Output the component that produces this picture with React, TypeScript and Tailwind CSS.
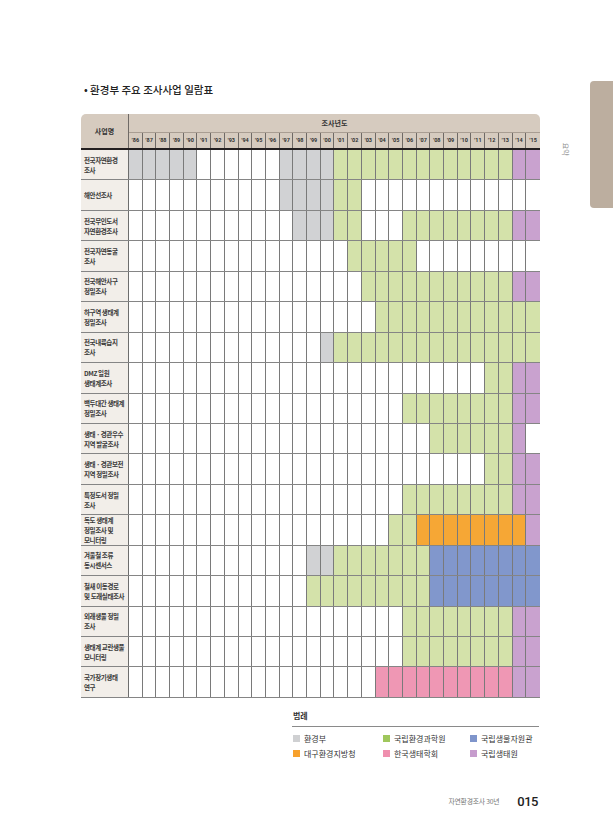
const YEARS = [
    "86", "87", "88", "89", "90", "91", "92", "93", "94", "95", "96", "97", "98", "99", "00",
    "01", "02", "03", "04", "05", "06", "07", "08", "09", "10", "11", "12", "13", "14", "15",
];

// one letter per year, '86 → '15
const ROWS: { label: string[]; cells: string }[] = [
    { label: ["전국자연환경", "조사"], cells: "ggggg......ggggnnnnnnnnnnnnnpp" },
    { label: ["해안선조사"], cells: "...........ggggnn............." },
    { label: ["전국무인도서", "자연환경조사"], cells: "............gggnn...nnnnnnnnpp" },
    { label: ["전국자연동굴", "조사"], cells: "................nnnnn........." },
    { label: ["전국해안사구", "정밀조사"], cells: ".................nnnnnnnnnnnpp" },
    { label: ["하구역 생태계", "정밀조사"], cells: "..................nnnnnnnnnnnn" },
    { label: ["전국내륙습지", "조사"], cells: "..............gnnnnnnnnnnnnnnn" },
    { label: ["DMZ 일원", "생태계조사"], cells: "..........................nnpp" },
    { label: ["백두대간 생태계", "정밀조사"], cells: "....................nnnnnnnnpp" },
    { label: ["생태 · 경관우수", "지역 발굴조사"], cells: "......................nnnnnnp." },
    { label: ["생태 · 경관보전", "지역 정밀조사"], cells: "..........................nnpp" },
    { label: ["특정도서 정밀", "조사"], cells: "....................nnnnnnnnpp" },
    { label: ["독도 생태계", "정밀조사 및", "모니터링"], cells: "...................nnoooooooop" },
    { label: ["겨울철 조류", "동시센서스"], cells: ".............ggnnnnnnnbbbbbbbb" },
    { label: ["철새 이동경로", "및 도래실태조사"], cells: ".............nnnnnnnnnbbbbbbbb" },
    { label: ["외래생물 정밀", "조사"], cells: "....................nnnnnnnnpp" },
    { label: ["생태계 교란생물", "모니터링"], cells: "....................nnnnnnnnpp" },
    { label: ["국가장기생태", "연구"], cells: "..................kkkkkkkkkkpp" },
];

const CELL: Record<string, string> = {
    ".": "bg-white",
    g: "bg-[#d1d2d4]",
    n: "bg-[#d4e2aa]",
    p: "bg-[#c9a2cf]",
    o: "bg-[#f6a735]",
    b: "bg-[#8197cc]",
    k: "bg-[#ef97b4]",
};

const LEGEND = [
    { name: "환경부", color: "bg-[#cfd0d2]" },
    { name: "국립환경과학원", color: "bg-[#9fc75c]" },
    { name: "국립생물자원관", color: "bg-[#7f95cb]" },
    { name: "대구환경지방청", color: "bg-[#f7a12d]" },
    { name: "한국생태학회", color: "bg-[#ef8fae]" },
    { name: "국립생태원", color: "bg-[#c69ccd]" },
];

function SurveyTable() {
    return (
        <div className="w-[459px]">
            <div className="flex h-[34px] rounded-t-[5px] bg-[#d6cbbf] overflow-hidden">
                <div className="w-[48px] flex items-center justify-center border-r border-[#6f6a66] text-[7px] font-bold text-[#333]">
                    사업명
                </div>
                <div className="flex-1 flex flex-col">
                    <div className="h-[18px] flex items-center justify-center text-[7px] font-bold text-[#333]">
                        조사년도
                    </div>
                    <div className="flex-1 grid grid-cols-[repeat(30,minmax(0,1fr))] border-t border-[#a89d92]">
                        {YEARS.map((y, i) => (
                            <div
                                key={y}
                                className={`flex items-center justify-center text-[5.5px] font-bold text-[#333] font-['Roboto',sans-serif] ${i < 29 ? "border-r border-[#6f6a66]" : ""}`}
                            >
                                ’{y}
                            </div>
                        ))}
                    </div>
                </div>
            </div>
            <div className="h-[2px] bg-[#231f20]" />
            {ROWS.map((row) => (
                <div key={row.label.join("")} className="flex h-[30.45px] border-b border-[#858585]">
                    <div className="w-[48px] shrink-0 bg-[#f2eee9] border-r border-[#6d6d6d] flex flex-col justify-center pl-[3px] text-[6.5px] leading-[10px] font-semibold tracking-[-0.4px] text-[#3a3a3a] whitespace-nowrap">
                        {row.label.map((l) => (
                            <span key={l}>{l}</span>
                        ))}
                    </div>
                    <div className="flex-1 grid grid-cols-[repeat(30,minmax(0,1fr))]">
                        {row.cells.split("").map((c, i) => (
                            <div
                                key={i}
                                className={`${CELL[c]} ${i < 29 ? "border-r border-[#7a7a7a]" : ""}`}
                            />
                        ))}
                    </div>
                </div>
            ))}
        </div>
    );
}

function Legend() {
    return (
        <div className="ml-[211px] w-[247px] mt-[12px]">
            <div className="pb-[4px] border-b border-[#8a8a8a] text-[8px] font-bold text-[#333] leading-[12px] pl-[1px]">
                범례
            </div>
            <div className="grid grid-cols-[90px_87px_1fr] mt-[4px] text-[8px] text-[#333] leading-[15px]">
                {LEGEND.map((l) => (
                    <div key={l.name} className="flex items-center gap-[4px] pl-[1px]">
                        <span className={`w-[7px] h-[7px] ${l.color}`} />
                        <span>{l.name}</span>
                    </div>
                ))}
            </div>
        </div>
    );
}

export default function App() {
    return (
        <div className="w-[613px] h-[840px] bg-white flex font-['Noto_Sans_CJK_KR','Noto_Sans',sans-serif]">
            <div className="w-[540px] shrink-0 pl-[81px] pt-[83px] flex flex-col">
                <h1 className="pl-[3px] text-[10.5px] leading-[14px] font-medium text-[#222]">
                    • 환경부 주요 조사사업 일람표
                </h1>
                <div className="mt-[17px]">
                    <SurveyTable />
                </div>
                <Legend />
                <div className="mt-auto mb-[29px] flex items-center justify-end gap-[18px] pr-[2px]">
                    <span className="text-[6.8px] text-[#777] tracking-[-0.2px]">자연환경조사 30년</span>
                    <span className="text-[13px] font-medium text-[#222] font-['Roboto',sans-serif] tracking-[-0.5px]">015</span>
                </div>
            </div>
            <div className="flex-1 flex items-start pt-[81px]">
                <div className="flex-1 h-[127px] flex items-center justify-center pt-[10px]">
                    <span className="inline-block rotate-90 text-[7px] text-[#888]">요약</span>
                </div>
                <div className="w-[23px] h-[127px] rounded-l-[4px] bg-[#bcae9f]" />
            </div>
        </div>
    );
}
